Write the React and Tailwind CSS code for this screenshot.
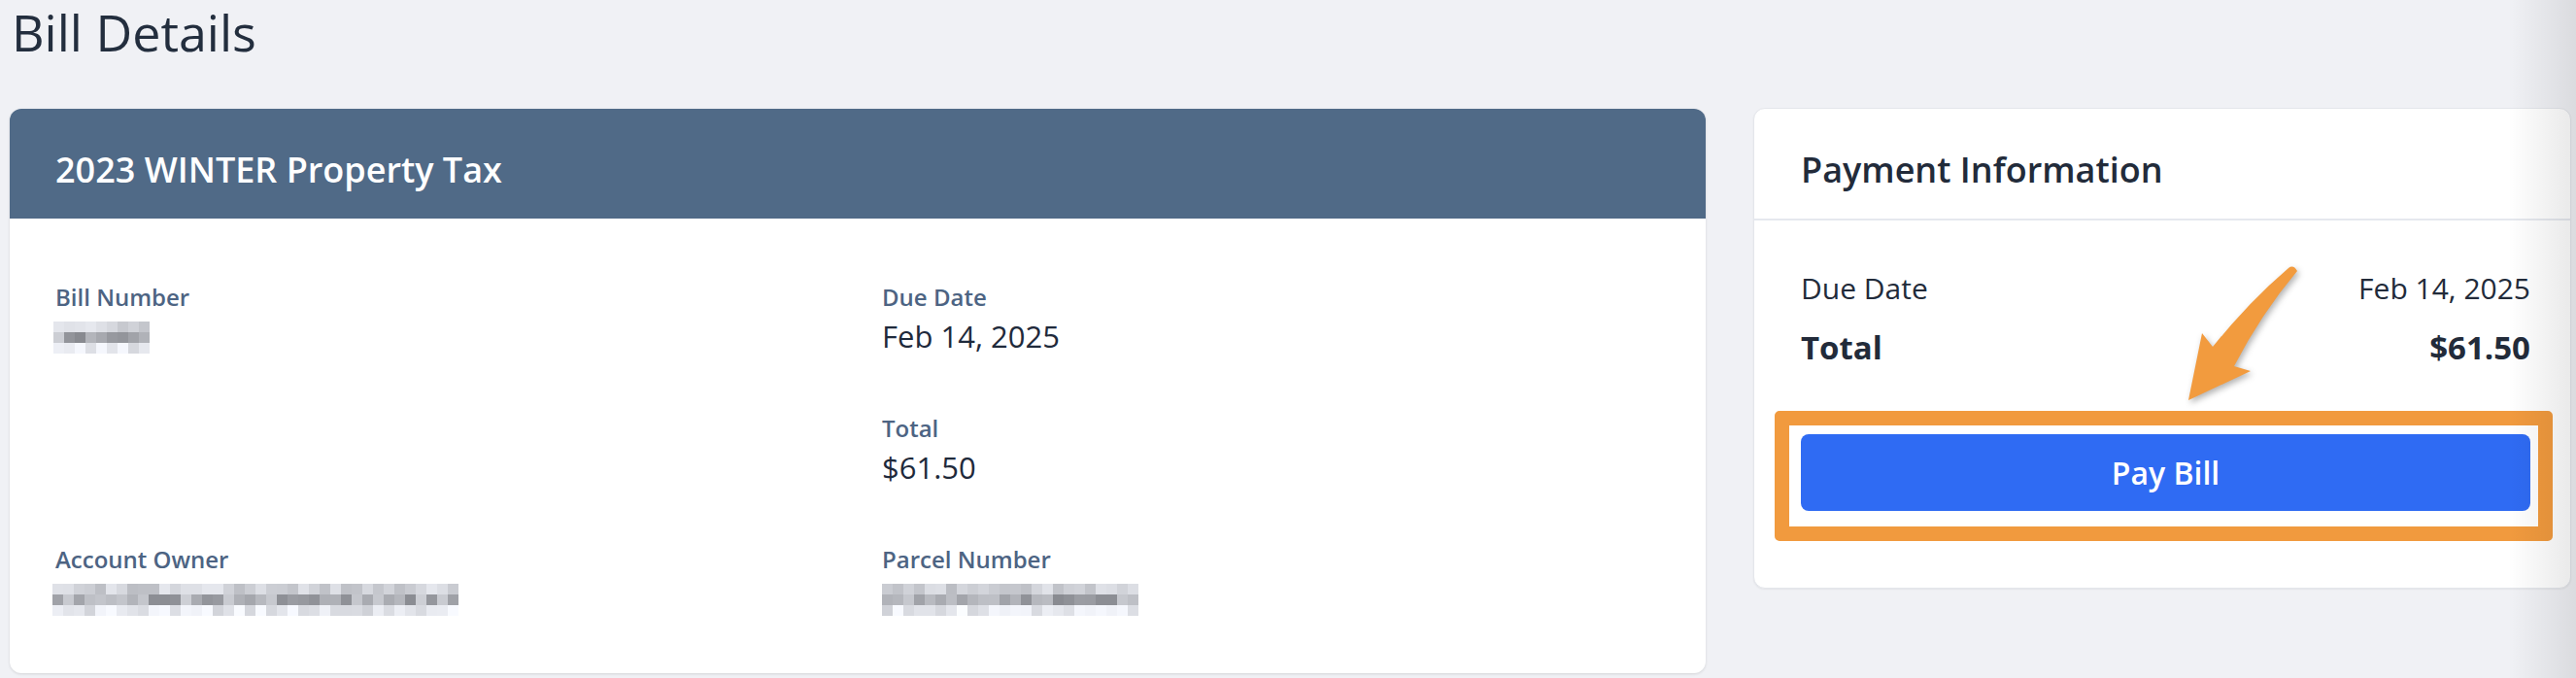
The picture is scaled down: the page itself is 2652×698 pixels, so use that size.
import React from 'react';

function Mosaic({ cols, seed }) {
  return (
    <div className="flex flex-col">
      {[0, 1, 2].map((r) => (
        <div key={r} className="flex">
          {Array.from({ length: cols }).map((_, c) => {
            const n = Math.abs(Math.sin((c + 1) * 12.9898 + (r + 1) * 78.233 + seed) * 43758.5453) % 1;
            const base = r === 1 ? 140 : r === 0 ? 188 : 210;
            const span = r === 1 ? 70 : 46;
            const v = Math.round(base + n * span);
            return (
              <div
                key={c}
                className="h-[11px] w-[11px]"
                style={{ backgroundColor: `rgb(${v - 4},${v - 2},${v + 4})` }}
              />
            );
          })}
        </div>
      ))}
    </div>
  );
}

function Field({ label, children }) {
  return (
    <div>
      <div className="text-[24px] leading-[33px] font-semibold text-[#4d6483]">{label}</div>
      {children}
    </div>
  );
}

function Value({ children }) {
  return <div className="mt-[3px] text-[31px] leading-[42px] text-[#1f2a3b]">{children}</div>;
}

function Blurred({ cols, seed, shift }) {
  return (
    <div className={`mt-[3px] h-[42px] pt-[6px] ${shift}`}>
      <Mosaic cols={cols} seed={seed} />
    </div>
  );
}

export default function App() {
  return (
    <div className="relative h-[698px] w-full overflow-hidden bg-[#f0f1f5] pl-[10px] pr-[5px] font-['Open_Sans',sans-serif]">
      <h1 className="mt-[3px] pl-[2px] text-[52px] leading-[60px] text-[#232e3e]">Bill Details</h1>

      <div className="mt-[49px] flex items-start gap-[49px]">
        {/* Bill card */}
        <div className="w-[1746px] shrink-0 overflow-hidden rounded-[12px] bg-white shadow-[0_1px_3px_rgba(0,0,0,0.12)]">
          <div className="h-[113px] bg-[#506a87] pl-[47px] pt-[36px]">
            <h2 className="text-[36px] font-semibold text-white">2023 WINTER Property Tax</h2>
          </div>
          <div className="grid grid-cols-2 gap-x-[50px] gap-y-[57px] px-[47px] pt-[64px] pb-[56px]">
            <Field label="Bill Number">
              <Blurred cols={9} seed={3} shift="ml-[-2px]" />
            </Field>
            <Field label="Due Date">
              <Value>Feb 14, 2025</Value>
            </Field>
            <div className="h-[78px]" />
            <Field label="Total">
              <Value>$61.50</Value>
            </Field>
            <Field label="Account Owner">
              <Blurred cols={38} seed={7} shift="ml-[-3px]" />
            </Field>
            <Field label="Parcel Number">
              <Blurred cols={24} seed={11} shift="ml-0" />
            </Field>
          </div>
        </div>

        {/* Payment card */}
        <div className="relative mt-[-1px] w-[842px] shrink-0 rounded-[12px] border border-[#e4e6eb] bg-white shadow-[0_1px_2px_rgba(0,0,0,0.06)]">
          <div className="h-[115px] border-b-2 border-[#e5e8ee] pl-[48px] pt-[36px]">
            <h2 className="text-[36px] font-semibold text-[#222b3a]">Payment Information</h2>
          </div>
          <div className="pl-[48px] pr-[41px] pt-[50px] pb-[79px]">
            <div className="flex items-center justify-between text-[30px] leading-[40px] text-[#222b3a]">
              <span>Due Date</span>
              <span>Feb 14, 2025</span>
            </div>
            <div className="mt-[19px] flex items-center justify-between text-[33px] leading-[44px] font-bold text-[#222b3a]">
              <span>Total</span>
              <span>$61.50</span>
            </div>
            <button className="mt-[67px] flex h-[79px] w-full items-center justify-center rounded-[8px] bg-[#2f6bf3] text-[32px] font-semibold text-white">
              Pay Bill
            </button>
          </div>

          {/* annotation: highlight box */}
          <div className="pointer-events-none absolute left-[21px] top-[311px] h-[134px] w-[801px] rounded-[5px] border-[15px] border-[#f19a3e]" />

          {/* annotation: arrow */}
          <svg
            className="pointer-events-none absolute left-[434px] top-[153px] drop-shadow-[2px_3px_3px_rgba(0,0,0,0.3)]"
            width="130"
            height="160"
            viewBox="0 0 130 160"
          >
            <path
              d="M116 11 Q121 7 125 14 Q88 58 60 112 L77 117 L13 147 L27 78 L38 92 Q76 45 116 11 Z"
              fill="#f29b3e"
            />
          </svg>
        </div>
      </div>

      {/* window edge shading */}
      <div className="pointer-events-none absolute right-0 top-0 h-full w-[70px] bg-gradient-to-r from-transparent to-black/[0.09]" />
    </div>
  );
}
